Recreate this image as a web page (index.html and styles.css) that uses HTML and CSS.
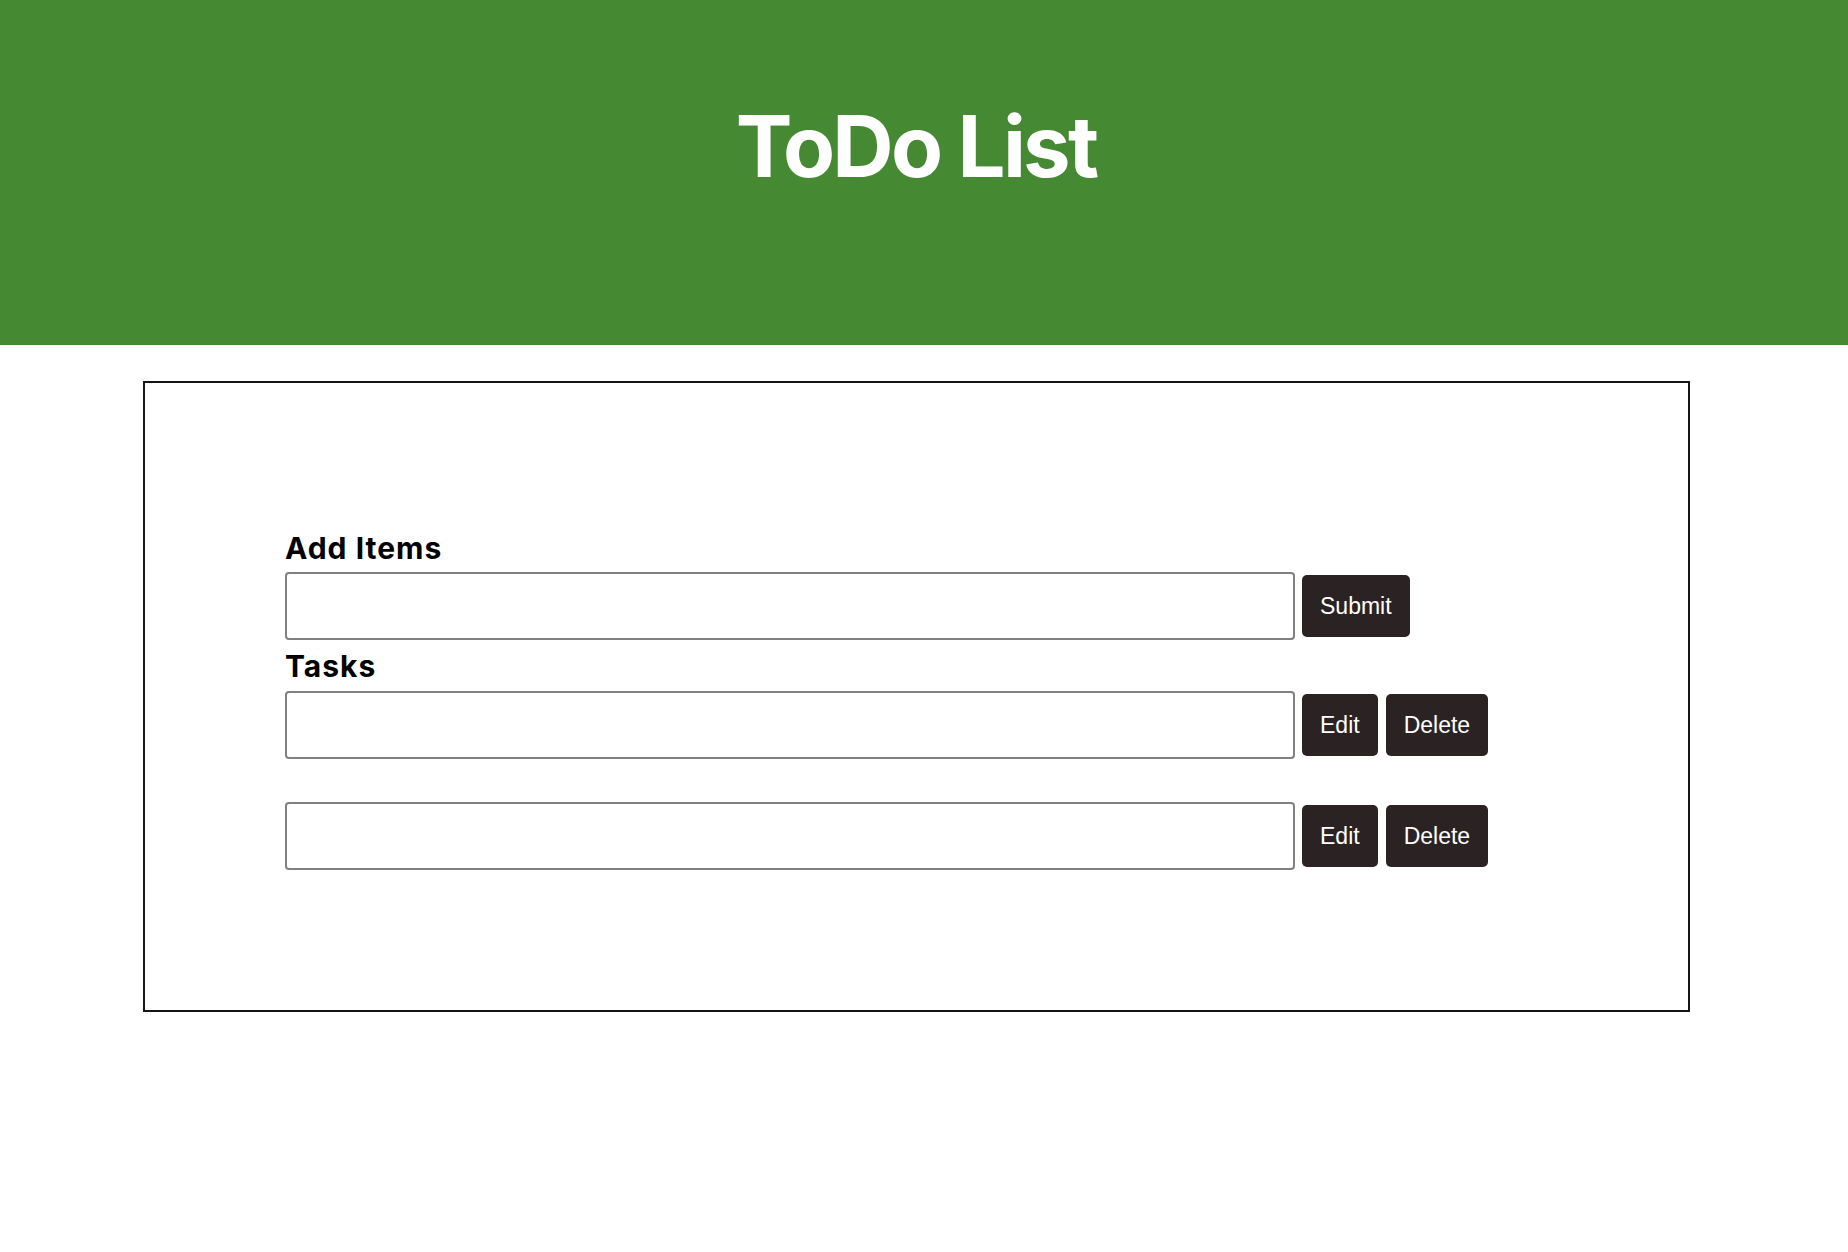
FILE: index.html
```html
<!DOCTYPE html>
<html lang="en">
<head>
<meta charset="utf-8">
<title>ToDo List</title>
<link rel="stylesheet" href="styles.css">
</head>
<body>
  <header class="header">
    <h1 class="title">ToDo List</h1>
  </header>
  <main class="card">
    <section class="add">
      <h2 class="label">Add Items</h2>
      <div class="row">
        <input class="field" type="text">
        <button class="btn">Submit</button>
      </div>
    </section>
    <section class="tasks">
      <h2 class="label label-tasks">Tasks</h2>
      <div class="list">
        <div class="row">
          <input class="field" type="text">
          <button class="btn">Edit</button>
          <button class="btn">Delete</button>
        </div>
        <div class="row">
          <input class="field" type="text">
          <button class="btn">Edit</button>
          <button class="btn">Delete</button>
        </div>
      </div>
    </section>
  </main>
</body>
</html>
```

FILE: styles.css
```css
* { box-sizing: border-box; }

body {
  margin: 0;
  font-family: Inter, "Noto Sans", sans-serif;
  background: #ffffff;
  color: #000;
}

.header {
  height: 345px;
  background: #458933;
  padding-top: 104px;
  padding-right: 16px;
}

.title {
  margin: 0;
  text-align: center;
  color: #ffffff;
  font-size: 85px;
  line-height: 85px;
  font-weight: 700;
  letter-spacing: -2.8px;
}

.card {
  margin: 36px 0 0 143px;
  width: 1547px;
  height: 631px;
  border: 2px solid #151515;
  padding: 148px 0 0 140px;
}

.label {
  margin: 0 0 6px 0;
  font-size: 30px;
  line-height: 35px;
  font-weight: 700;
  letter-spacing: 1px;
}

.label-tasks {
  margin-top: 9px;
  margin-bottom: 7px;
}

.list {
  display: flex;
  flex-direction: column;
  gap: 43px;
}

.row {
  display: flex;
  align-items: center;
  gap: 7px;
}

.field {
  width: 1010px;
  height: 68px;
  border: 2px solid #808080;
  border-radius: 4px;
  background: #fff;
  margin: 0;
}

.btn {
  height: 62px;
  padding: 0 18px;
  border: none;
  border-radius: 5px;
  background: #2b2323;
  color: #ffffff;
  font-family: "Liberation Sans", Arial, sans-serif;
  font-size: 23px;
  margin: 0;
}

.row .btn + .btn {
  margin-left: 1px;
}
```
